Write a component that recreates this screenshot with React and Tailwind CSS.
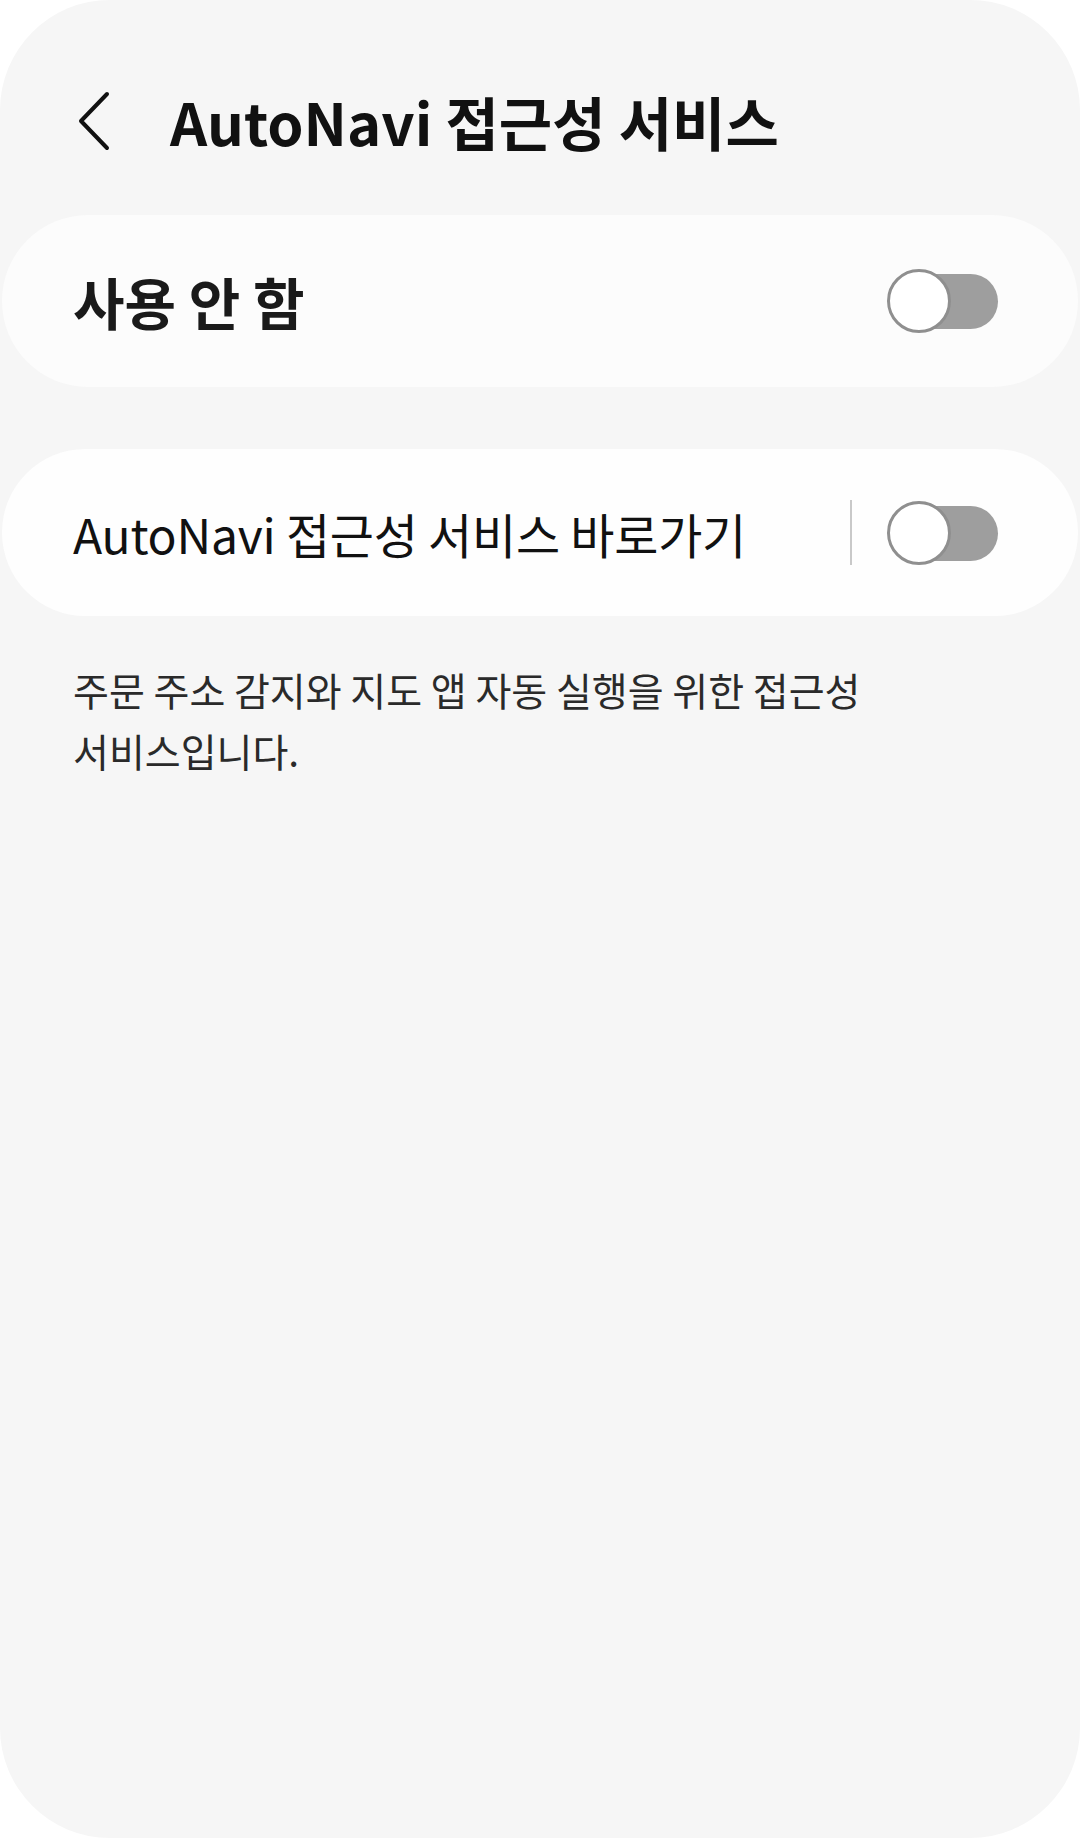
import React from "react";

const FONT = { fontFamily: '"Noto Sans CJK KR", "Noto Sans", sans-serif' };

// 꺼진 상태의 스위치
function Toggle() {
  return (
    <div className="relative w-[111px] h-[64px] shrink-0">
      <div className="absolute left-[14px] right-0 top-[5px] h-[55px] rounded-full bg-[#9e9e9e]" />
      <div className="absolute left-0 top-0 w-[64px] h-[64px] rounded-full bg-white border-[3px] border-[#8f8f8f]" />
    </div>
  );
}

export default function App() {
  return (
    <div className="w-[1080px] h-[1838px] bg-white" style={FONT}>
      <div className="w-full h-full bg-[#f6f6f6] rounded-[110px] overflow-hidden">
        {/* header */}
        <div className="pt-[72px] h-[170px] flex items-start">
          <div className="h-[98px] flex items-center">
            <svg className="ml-[76px] w-[36px] h-[60px]" viewBox="0 0 36 60" fill="none">
              <path d="M31 3 L5 30 L31 57" stroke="#111" strokeWidth="4" strokeLinecap="round" strokeLinejoin="round" />
            </svg>
            <h1 className="ml-[58px] text-[58px] font-bold text-[#111] leading-none">
              AutoNavi 접근성 서비스
            </h1>
          </div>
        </div>

        {/* 사용 안 함 */}
        <div className="mt-[45px] mx-[2px] h-[172px] rounded-[86px] bg-[#fcfcfc] flex items-center justify-between pl-[71px] pr-[80px]">
          <span className="text-[56px] font-bold text-[#1a1a1a] leading-none">사용 안 함</span>
          <Toggle />
        </div>

        {/* 바로가기 */}
        <div className="mt-[62px] mx-[2px] h-[167px] rounded-[84px] bg-[#fefefe] flex items-center pl-[71px] pr-[80px]">
          <span className="flex-1 text-[48px] text-[#111] tracking-[-0.25px] leading-none">
            AutoNavi 접근성 서비스 바로가기
          </span>
          <div className="w-[2px] h-[65px] bg-[#c9c9c9] mr-[35px]" />
          <Toggle />
        </div>

        <p className="mt-[43px] pl-[73px] text-[39px] leading-[61px] text-[#2a2a2a]">
          주문 주소 감지와 지도 앱 자동 실행을 위한 접근성
          <br />
          서비스입니다.
        </p>
      </div>
    </div>
  );
}
